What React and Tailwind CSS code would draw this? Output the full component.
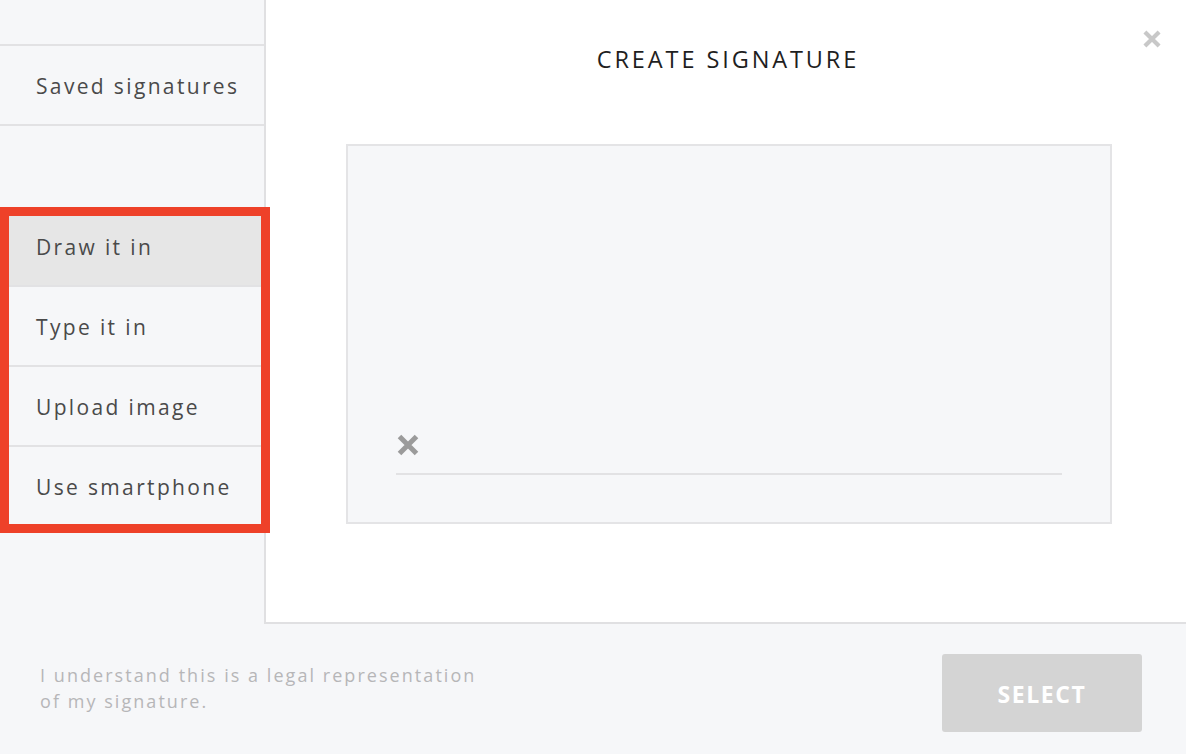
// Create signature dialog
const font = { fontFamily: '"Open Sans", "Liberation Sans", sans-serif' }

function Cross({ size, color, stroke }) {
    return (
        <svg width={size} height={size} viewBox="0 0 24 24">
            <path d="M3.5 3.5 L20.5 20.5 M20.5 3.5 L3.5 20.5" stroke={color} strokeWidth={stroke} strokeLinecap="butt" />
        </svg>
    )
}

function SideRow({ label, active }) {
    return (
        <div className={`h-[80px] flex items-center pl-[36px] pt-[3px] border-b-2 border-[#e2e2e4] text-[21px] tracking-[2.35px] text-[#4a4a4a] ${active ? 'bg-[#e6e6e6]' : ''}`}>
            {label}
        </div>
    )
}

export default function App() {
    const methods = ['Draw it in', 'Type it in', 'Upload image', 'Use smartphone']

    return (
        <div className="w-[1186px] h-[754px] flex flex-col bg-[#f6f7f9] overflow-hidden" style={font}>
            <div className="flex h-[624px]">

                {/* Sidebar */}
                <aside className="relative z-10 w-[266px] shrink-0 border-r-2 border-[#e0e0e2] bg-[#f6f7f9]">
                    <div className="h-[46px] border-b-2 border-[#e2e2e4]"></div>
                    <SideRow label="Saved signatures" />
                    <div className="h-[81px]"></div>
                    {methods.map((m, i) => (
                        <SideRow key={m} label={m} active={i === 0} />
                    ))}

                    {/* highlight box */}
                    <div className="absolute left-0 top-[207px] w-[270px] h-[326px] border-[9px] border-[#ee4129] pointer-events-none"></div>
                </aside>

                {/* Main panel */}
                <main className="relative flex-1 bg-white border-b-2 border-[#e0e0e2] flex flex-col items-center pt-[44px]">
                    <h1 className="text-[23.5px] leading-[30px] tracking-[2.9px] text-[#1f1f1f] pl-[4px]">CREATE SIGNATURE</h1>

                    <div className="mt-[70px] ml-[5px] w-[766px] h-[380px] border-2 border-[#e4e4e6] bg-[#f6f7f9] flex flex-col justify-end px-[48px] pb-[47px]">
                        <Cross size={24} color="#9b9b9b" stroke={5} />
                        <div className="mt-[16px] h-[2px] bg-[#e2e2e4]"></div>
                    </div>

                    <button className="absolute right-[24px] top-[29px]">
                        <Cross size={20} color="#c8c8c8" stroke={5} />
                    </button>
                </main>
            </div>

            {/* Footer */}
            <footer className="flex justify-between px-[40px] pr-[44px] pt-[30px]">
                <p className="mt-[8px] text-[18px] leading-[26px] tracking-[2.05px] text-[#b6b6b8]">
                    I understand this is a legal representation<br />of my signature.
                </p>
                <button className="w-[200px] h-[78px] rounded-[3px] bg-[#d4d4d4] text-white text-[23px] font-bold tracking-[1.6px] pt-[2px]">
                    SELECT
                </button>
            </footer>
        </div>
    )
}
